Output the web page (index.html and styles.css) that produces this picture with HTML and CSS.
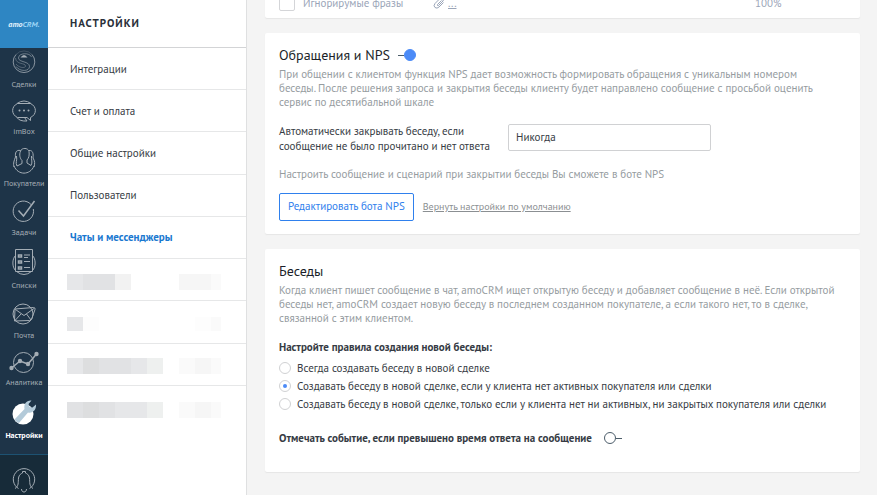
FILE: index.html
```html
<!DOCTYPE html>
<html lang="ru">
<head>
    <meta charset="UTF-8">
    <meta name="viewport" content="width=device-width, initial-scale=1.0">
    <title>Чаты и мессенджеры</title>
    <link rel="stylesheet" href="styles.css">
</head>
<body>

    <!-- Main navigation -->
    <div class="rail">
        <a class="logo" href="#">amo<span>CRM.</span></a>
        <nav class="rail-nav">
            <a class="rail-item" href="#">
                <svg width="26" height="26" viewBox="0 0 26 26">
                    <path d="M5 5.500A10.800 10.800 0 1 0 21 5.500" opacity=".8"/>
                    <path d="M5 5.500A10.800 10.800 0 0 1 21 5.500" opacity=".25"/>
                    <path d="M20.500 8C19 3.500 7.500 3.500 7.500 9C7.500 13.500 18.500 12 18.500 17.500C18.500 22.500 9 23 5 17.500" opacity=".6"/>
                    <path d="M4.500 9C5 16 14.500 13.500 14.500 17C14.500 19.500 8 19 5 15" opacity=".4"/>
                    <path class="fill" d="M9.500 8.500Q13 3.500 16.500 8.500Z"/>
                </svg>
                <span>Сделки</span>
            </a>
            <a class="rail-item" href="#">
                <svg width="26" height="22" viewBox="0 0 26 22">
                    <path d="M6.500 3.500H19.500C26 6.500 26 14.500 19.500 17.500V20.500L16 17.500H6.500C0 14.500 0 6.500 6.500 3.500Z"/>
                    <path d="M6 3.500Q13-1.500 20 3.500M6 17.500Q8.500 21.500 16 21L13.500 17.500"/>
                    <path class="dots" d="M8.500 10.500H8.510M13 10.500H13.010M17.500 10.500H17.510"/>
                </svg>
                <span>imBox</span>
            </a>
            <a class="rail-item" href="#">
                <svg width="26" height="27" viewBox="0 0 26 27">
                    <path d="M9.500 4C11 .5 17 .5 18 4.500C18.500 8 18 11 16 13V16L20 18.500"/>
                    <path d="M9.500 4C8 8 9 11.500 11 13.500V16.500L6 19"/>
                    <path d="M9.500 3.500C5 2.500 4 6 4.500 10C3 14 2 16 3 20M18 3.500C22 3 22.500 7 22 11C24 14 24 17 23 20"/>
                    <path d="M6 19C4 15 6.500 14 5.500 9M20 18.500C22 15 20 13 20.500 9"/>
                    <path d="M3 19C7 28.500 19 28.500 23 19"/>
                </svg>
                <span>Покупатели</span>
            </a>
            <a class="rail-item" href="#">
                <svg width="26" height="24" viewBox="0 0 26 24">
                    <path d="M20 5.500A10.200 10.200 0 1 0 22.300 10"/>
                    <path class="thick" d="M7.500 11.500L12.500 17L23.500 2"/>
                </svg>
                <span>Задачи</span>
            </a>
            <a class="rail-item" href="#">
                <svg width="26" height="28" viewBox="0 0 26 28">
                    <path d="M4.500 1.500H21.500V23.500H4.500ZM4.500 7.500C1 11 1 19 4.500 22.500M21.500 7.500C25 11 25 19 21.500 22.500M5.500 23.500Q13 29.500 20.500 23.500"/>
                    <path class="thick" d="M7.500 7H10.500V9H7.500ZM7.500 13H10.500V15H7.500ZM7.500 19H10.500V21H7.500Z"/>
                    <path d="M13 7H19M13 13.500H19M13 19.500H19M13 9.500H17"/>
                </svg>
                <span>Списки</span>
            </a>
            <a class="rail-item" href="#">
                <svg width="26" height="25" viewBox="0 0 26 25">
                    <circle cx="12" cy="13" r="10"/>
                    <path d="M4 8L22.500 6.500Q24.500 6.500 24 8.500L20.500 18.500Q20 19.500 18.500 19.500L3.500 20Z"/>
                    <path d="M4.500 8.500L13 14.500L23 7.500M4 19.500L10 13M20 19L15.500 13"/>
                </svg>
                <span>Почта</span>
            </a>
            <a class="rail-item" href="#">
                <svg width="30" height="22" viewBox="0 0 30 22">
                    <circle cx="14.500" cy="11.500" r="10"/>
                    <path class="thick" d="M2.500 17L11 10L19 13L27.500 3"/>
                    <g class="fill"><circle cx="2.500" cy="17" r="2.200"/><circle cx="11" cy="10" r="2.200"/><circle cx="19" cy="13" r="2.200"/><circle cx="27.500" cy="3" r="2.200"/></g>
                </svg>
                <span>Аналитика</span>
            </a>
            <a class="rail-item active" href="#">
                <svg width="26" height="28" viewBox="0 0 26 28">
                    <circle class="disc" cx="12" cy="16" r="10.500"/>
                    <path class="wrench" d="M3.500 21.500L13.500 11C12.500 6 15.500 2 20.500 2.500L17.500 6L18.500 9L21.500 9.500L25 6.500C25.500 12 21.500 15.500 17 14.500L8 25Q5 24 3.500 21.500Z"/>
                </svg>
                <span>Настройки</span>
            </a>
        </nav>
        <button class="bell" aria-label="Уведомления">
            <svg width="26" height="28" viewBox="0 0 26 28">
                <path d="M7.500 22.500A10.700 10.700 0 1 1 18.500 22.500"/>
                <path d="M4 22.500C8 20 7 16.500 7.500 12C8 8.500 10.500 7.500 11.500 7V5.500H14.500V7C15.500 7.500 18 8.500 18.500 12C19 16.500 18 20 22 22.500M10.500 23C10.500 27 15.500 27 15.500 23"/>
            </svg>
        </button>
    </div>

    <!-- Settings menu -->
    <aside class="settings">
        <h1>Настройки</h1>
        <nav class="menu">
            <a href="#">Интеграции</a>
            <a href="#">Счет и оплата</a>
            <a href="#">Общие настройки</a>
            <a href="#">Пользователи</a>
            <a class="active" href="#">Чаты и мессенджеры</a>
            <div class="masked">
                <div class="blocks"><i class="c2"></i><i class="c1"></i><i class="c1"></i><i class="c4"></i></div>
                <div class="blocks"><i class="c5"></i><i class="c5"></i><i class="c6 half"></i></div>
            </div>
            <div class="masked">
                <div class="blocks low"><i class="c2"></i><i class="c7"></i></div>
                <div class="blocks low"><i class="c7"></i><i class="c6 half"></i></div>
            </div>
            <div class="masked">
                <div class="blocks"><i class="c2"></i><i class="c0"></i><i class="c1"></i><i class="c1"></i><i class="c2"></i><i class="c3"></i></div>
                <div class="blocks"><i class="c6"></i><i class="c5"></i><i class="c6 half"></i></div>
            </div>
            <div class="masked last">
                <div class="blocks"><i class="c1"></i><i class="c0"></i><i class="c1"></i><i class="c2"></i><i class="c2"></i><i class="c3"></i></div>
                <div class="blocks"><i class="c6"></i><i class="c5"></i><i class="c6 half"></i></div>
            </div>
        </nav>
    </aside>

    <main class="content">
        <section class="card phrases">
            <div class="phrase-row">
                <label><input type="checkbox"> Игнорирумые фразы</label>
                <div class="attach">
                    <svg width="12" height="12" viewBox="0 0 12 12">
                        <path d="M8.500 3.500L4.500 7.500Q4 9 5.500 8.500L10 4Q11.500 1.500 9.500 1Q8 .5 7 1.500L2 6.500Q0 9 2 10.500Q4 12 6 10L10.500 5.500"/>
                    </svg>
                    <a href="#">...</a>
                </div>
                <span>100%</span>
            </div>
        </section>

        <section class="card">
            <div class="card-title">
                <h2 id="nps-title">Обращения и NPS</h2>
                <input class="switch" type="checkbox" aria-labelledby="nps-title" checked>
            </div>
            <p class="hint">При общении с клиентом функция NPS дает возможность формировать обращения с уникальным номером<br>
                беседы. После решения запроса и закрытия беседы клиенту будет направлено сообщение с просьбой оценить<br>
                сервис по десятибальной шкале</p>
            <div class="field">
                <label for="autoclose">Автоматически закрывать беседу, если<br>сообщение не было прочитано и нет ответа</label>
                <select id="autoclose">
                    <option>Никогда</option>
                </select>
            </div>
            <p class="hint bot-hint">Настроить сообщение и сценарий при закрытии беседы Вы сможете в боте NPS</p>
            <div class="actions">
                <button class="edit-btn">Редактировать бота NPS</button>
                <a href="#">Вернуть настройки по умолчанию</a>
            </div>
        </section>

        <section class="card talks">
            <div class="card-title">
                <h2>Беседы</h2>
            </div>
            <p class="hint">Когда клиент пишет сообщение в чат, amoCRM ищет открытую беседу и добавляет сообщение в неё. Если открытой<br>
                беседы нет, amoCRM создает новую беседу в последнем созданном покупателе, а если такого нет, то в сделке,<br>
                связанной с этим клиентом.</p>
            <fieldset>
                <legend>Настройте правила создания новой беседы:</legend>
                <label><input type="radio" name="rule"> Всегда создавать беседу в новой сделке</label>
                <label><input type="radio" name="rule" checked> Создавать беседу в новой сделке, если у клиента нет активных покупателя или сделки</label>
                <label><input type="radio" name="rule"> Создавать беседу в новой сделке, только если у клиента нет ни активных, ни закрытых покупателя или сделки</label>
            </fieldset>
            <label class="event">Отмечать событие, если превышено время ответа на сообщение
                <input class="switch" type="checkbox">
            </label>
        </section>
    </main>

</body>
</html>
```
FILE: styles.css
```css
*, *::before, *::after {
    box-sizing: border-box;
}
body {
    display: flex;
    height: 100vh;
    margin: 0;
    overflow: hidden;
    background: #f4f4f4;
    color: #363b44;
    font-family: "PT Sans", "Noto Sans", sans-serif;
    font-size: 11px;
    line-height: 14px;
}
h1, h2, p {
    margin: 0;
}
svg {
    display: block;
    fill: none;
    stroke: currentColor;
    stroke-width: 1;
}
svg .fill {
    fill: currentColor;
    stroke: none;
}
svg .thick {
    stroke-width: 1.5;
}
svg .dots {
    stroke-width: 2;
    stroke-linecap: round;
}
button, select {
    font-family: inherit;
    font-size: inherit;
}

/* Rail */
.rail {
    display: flex;
    flex-direction: column;
    flex: none;
    width: 48px;
    background: #1e3448;
}
.logo {
    display: flex;
    align-items: center;
    justify-content: center;
    flex: none;
    height: 48px;
    background: #2e86c3;
    color: #e4f3fc;
    font-size: 8px;
    font-style: italic;
    font-weight: bold;
    text-decoration: none;
    z-index: 1;
}
.logo span {
    color: #9bd4f5;
}
.rail-nav {
    flex: 1;
    min-height: 0;
    margin-top: -9px;
}
.rail-item {
    display: flex;
    flex-direction: column;
    align-items: center;
    gap: 3px;
    padding-top: 10px;
    color: #a4adb5;
    font-size: 8px;
    line-height: 12px;
    text-decoration: none;
    white-space: nowrap;
}
.rail-item.active {
    color: #fff;
    font-weight: bold;
}
.disc {
    fill: #fff;
    stroke: none;
}
.wrench {
    fill: #b3cad9;
    stroke: none;
}
.bell {
    display: flex;
    justify-content: center;
    flex: none;
    height: 41px;
    padding: 11px 0 0;
    border: 0;
    border-top: 1px solid #1d5272;
    background: #172b39;
    color: #a4adb5;
}

/* Settings menu */
.settings {
    flex: none;
    width: 199px;
    border-right: 1px solid #dfe0e1;
    background: #fff;
}
.settings h1 {
    height: 48px;
    padding-left: 22px;
    border-bottom: 1px solid #d3d4d6;
    color: #2a303a;
    font-size: 11px;
    letter-spacing: 1px;
    line-height: 46px;
    text-transform: uppercase;
}
.menu {
    display: grid;
    grid-template-rows: repeat(9, 1fr);
    min-height: 380px;
}
.menu > * {
    display: flex;
    align-items: center;
    border-bottom: 1px solid #e6e7e8;
}
.menu a {
    padding-left: 22px;
    color: #363b44;
    text-decoration: none;
}
.menu a.active {
    color: #1a78d0;
    font-weight: bold;
}
.masked {
    justify-content: space-between;
    padding: 4px 25px 0 19px;
}
.menu .last {
    padding-top: 6px;
    border-bottom: 0;
}
.blocks {
    display: flex;
    height: 16px;
}
.blocks.low {
    height: 14px;
}
.blocks i {
    width: 16px;
}
.blocks .half {
    width: 10px;
}
.c0 { background: #dddedf; }
.c1 { background: #e1e2e4; }
.c2 { background: #e6e7e9; }
.c3 { background: #eef0ef; }
.c4 { background: #f2f2f2; }
.c5 { background: #f6f6f6; }
.c6 { background: #fafafa; }
.c7 { background: #fdfdfd; }

/* Content */
.content {
    flex: 1;
    min-width: 0;
    padding: 0 17px 0 18px;
}
.card {
    margin-bottom: 15px;
    padding: 13px 14px;
    border-radius: 2px;
    background: #fff;
    box-shadow: 0 1px 1px #e6e6e6;
}
.phrases {
    margin-top: -18px;
    color: #9aa5b8;
}
.phrases.card {
    padding-bottom: 7px;
}
.phrase-row {
    display: grid;
    grid-template-columns: 154px 1fr 91px;
    align-items: center;
}
.phrase-row label {
    display: flex;
    align-items: center;
    gap: 8px;
}
.phrase-row input {
    width: 16px;
    height: 16px;
    margin: 0;
    appearance: none;
    border: 1px solid #d4d5d8;
    border-radius: 2px;
}
.attach {
    display: flex;
    align-items: center;
    gap: 3px;
}
.attach a {
    color: inherit;
}
.card-title {
    display: flex;
    align-items: center;
    gap: 8px;
    margin-bottom: 3px;
}
.card-title h2 {
    color: #1c1f29;
    font-size: 14px;
    font-weight: normal;
    line-height: 18px;
}
.hint {
    color: #969c9f;
}
.switch {
    display: flex;
    flex: none;
    align-items: center;
    margin: 0;
    appearance: none;
    color: #4c5d6a;
}
.switch::before {
    content: "";
    width: 12px;
    height: 12px;
    border: 1px solid;
    border-radius: 50%;
}
.switch::after {
    content: "";
    width: 6px;
    height: 1px;
    background: #4c5d6a;
}
.switch:checked {
    flex-direction: row-reverse;
}
.switch:checked::before {
    border-color: #4c8bf7;
    background: #4c8bf7;
}
.field {
    display: flex;
    align-items: flex-start;
    margin-top: 15px;
    line-height: 15px;
}
.field label {
    width: 229px;
}
.field select {
    width: 203px;
    height: 27px;
    padding: 0 7px 2px;
    appearance: none;
    border: 1px solid #d0d1d3;
    border-radius: 2px;
    background: #fff;
    color: #363b44;
}
.bot-hint {
    margin-top: 13px;
}
.actions {
    display: flex;
    align-items: center;
    gap: 9px;
    margin-top: 12px;
}
.edit-btn {
    height: 28px;
    padding: 0 8px 2px;
    border: 1px solid #2f80ed;
    border-radius: 2px;
    background: #fff;
    color: #2f80ed;
}
.actions a {
    color: #8b8f92;
    font-size: 10px;
}
.talks {
    padding-bottom: 27px;
}
fieldset {
    margin: 15px 0 0;
    padding: 0;
    border: 0;
}
legend {
    margin-bottom: 5px;
    padding: 0;
    font-weight: bold;
}
fieldset label {
    display: flex;
    align-items: center;
    gap: 6px;
    line-height: 18px;
}
fieldset input {
    display: grid;
    place-items: center;
    width: 12px;
    height: 12px;
    margin: 0;
    appearance: none;
    border: 1px solid #d0d1d3;
    border-radius: 50%;
}
fieldset input:checked::before {
    content: "";
    width: 4px;
    height: 4px;
    border-radius: 50%;
    background: #4c8bf7;
}
.event {
    display: flex;
    align-items: center;
    gap: 12px;
    margin-top: 18px;
    font-weight: bold;
}
```
